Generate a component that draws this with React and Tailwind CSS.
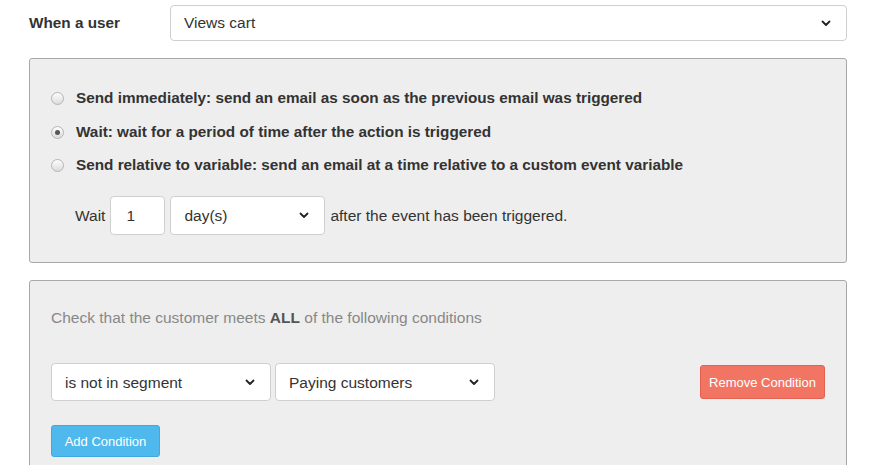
import React from 'react';

const Chevron = () => (
  <svg width="10" height="7" viewBox="0 0 10 7" className="shrink-0">
    <polyline points="1.5,1.5 5,5 8.5,1.5" fill="none" stroke="#222" strokeWidth="1.8" strokeLinecap="round" strokeLinejoin="round" />
  </svg>
);

const Select = ({ value, className }) => (
  <div
    className={`flex items-center justify-between bg-white border border-[#cfcfcf] rounded-[4px] pl-[13px] pr-[15px] text-[15.5px] text-[#333] ${className}`}
  >
    <span>{value}</span>
    <Chevron />
  </div>
);

const Radio = ({ checked }) => (
  <span className="w-[13px] h-[13px] rounded-full border border-[#b5b5b5] bg-gradient-to-b from-[#fdfdfd] to-[#dcdcdc] flex items-center justify-center shrink-0">
    {checked && <span className="w-[5px] h-[5px] rounded-full bg-[#555]" />}
  </span>
);

const options = [
  { label: 'Send immediately: send an email as soon as the previous email was triggered', checked: false },
  { label: 'Wait: wait for a period of time after the action is triggered', checked: true },
  { label: 'Send relative to variable: send an email at a time relative to a custom event variable', checked: false }
];

export default function App() {
  return (
    <div
      className="w-[877px] h-[465px] bg-white overflow-hidden relative text-[#333]"
      style={{ fontFamily: '"Liberation Sans", Arial, sans-serif' }}
    >
      <div className="flex items-center pt-[5px]">
        <div className="w-[170px] pl-[29px] font-bold text-[15.3px]">When a user</div>
        <Select value="Views cart" className="w-[677px] h-[36px]" />
      </div>

      <div className="ml-[29px] mt-[17px] w-[818px] h-[205px] bg-[#eeeeee] border border-[#a8a8a8] rounded-[3px] pt-[29px]">
        <div className="flex flex-col gap-[12.5px] pl-[21px]">
          {options.map((o) => (
            <label key={o.label} className="flex items-center gap-[12px] h-[21px] font-bold text-[15.3px] text-[#333]">
              <Radio checked={o.checked} />
              {o.label}
            </label>
          ))}
        </div>

        <div className="flex items-center mt-[20px] pl-[45px] text-[15.5px]">
          <span className="mr-[5px]">Wait</span>
          <div className="w-[55px] h-[39px] bg-white border border-[#cfcfcf] rounded-[4px] flex items-center pl-[15px]">1</div>
          <Select value="day(s)" className="w-[155px] h-[39px] ml-[5px]" />
          <span className="ml-[5px]">after the event has been triggered.</span>
        </div>
      </div>

      <div className="ml-[29px] mt-[17px] w-[818px] h-[200px] bg-[#eeeeee] border border-[#a8a8a8] rounded-[3px] px-[21px] pt-[25px]">
        <p className="text-[15.5px] text-[#888]">
          Check that the customer meets <b className="text-[#555]">ALL</b> of the following conditions
        </p>

        <div className="flex items-center mt-[34px]">
          <Select value="is not in segment" className="w-[220px] h-[38px]" />
          <Select value="Paying customers" className="w-[220px] h-[38px] ml-[4px]" />
          <button className="ml-auto h-[34px] w-[125px] bg-[#f27563] border border-[#e4614f] rounded-[3px] text-white text-[13px]">
            Remove Condition
          </button>
        </div>

        <button className="mt-[24px] h-[32px] w-[109px] bg-[#4fb8ec] border border-[#3fa9e0] rounded-[3px] text-white text-[13px]">
          Add Condition
        </button>
      </div>
    </div>
  );
}
